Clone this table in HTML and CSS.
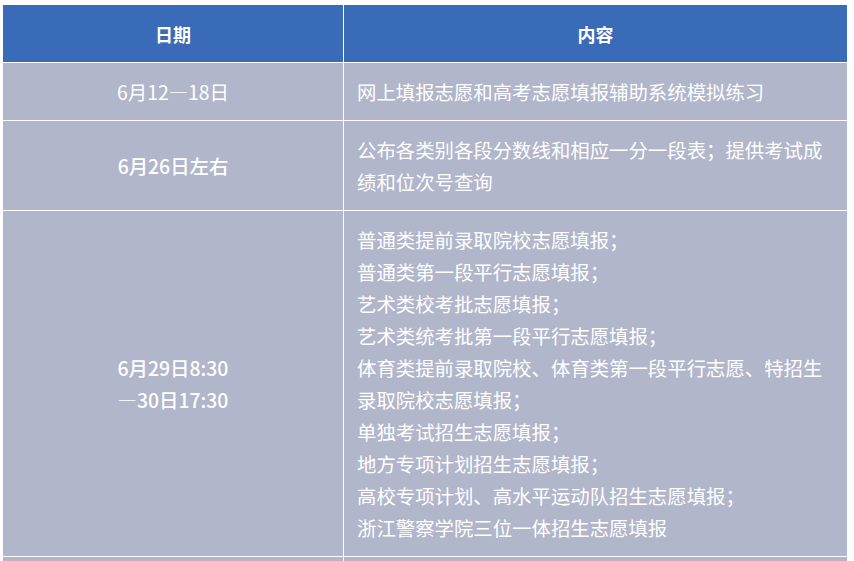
FILE: index.html
```html
<!DOCTYPE html>
<html lang="zh-CN">
<head>
<meta charset="utf-8">
<link rel="stylesheet" href="styles.css">
</head>
<body>
<table class="schedule">
  <thead>
    <tr><th class="col-date">日期</th><th class="col-content">内容</th></tr>
  </thead>
  <tbody>
    <tr>
      <td class="date">6月12—18日</td>
      <td class="content">网上填报志愿和高考志愿填报辅助系统模拟练习</td>
    </tr>
    <tr>
      <td class="date strong">6月26日左右</td>
      <td class="content">公布各类别各段分数线和相应一分一段表；提供考试成绩和位次号查询</td>
    </tr>
    <tr>
      <td class="date strong">6月29日8:30<br>—30日17:30</td>
      <td class="content">普通类提前录取院校志愿填报；<br>普通类第一段平行志愿填报；<br>艺术类校考批志愿填报；<br>艺术类统考批第一段平行志愿填报；<br>体育类提前录取院校、体育类第一段平行志愿、特招生录取院校志愿填报；<br>单独考试招生志愿填报；<br>地方专项计划招生志愿填报；<br>高校专项计划、高水平运动队招生志愿填报；<br>浙江警察学院三位一体招生志愿填报</td>
    </tr>
    <tr>
      <td class="date">&nbsp;</td>
      <td class="content">&nbsp;</td>
    </tr>
  </tbody>
</table>
</body>
</html>
```

FILE: styles.css
```css
html, body {
  margin: 0;
  padding: 0;
  background: #ffffff;
  overflow: hidden;
}
body {
  padding: 4px 0 0 2px;
  font-family: "Noto Sans CJK SC", "Noto Sans", sans-serif;
  color: #ffffff;
}
.schedule {
  border-collapse: collapse;
  width: 846px;
  border-top: 1px solid #e4e4e4;
}
.schedule th, .schedule td {
  border: 1px solid #ffffff;
  line-height: 32px;
  font-size: 19.4px;
}
.schedule th {
  background: #3a6bb8;
  font-weight: 700;
  font-size: 18px;
  height: 57px;
  padding: 0;
  text-align: center;
}
.col-date { width: 340px; }
.schedule td {
  background: #b1b6cb;
}
.date {
  text-align: center;
  vertical-align: middle;
  padding: 13px 4px 12px;
  font-size: 19px;
}
.date.strong { font-weight: 500; }
.content {
  text-align: left;
  padding: 13px 18px 12px 13px;
}
```
